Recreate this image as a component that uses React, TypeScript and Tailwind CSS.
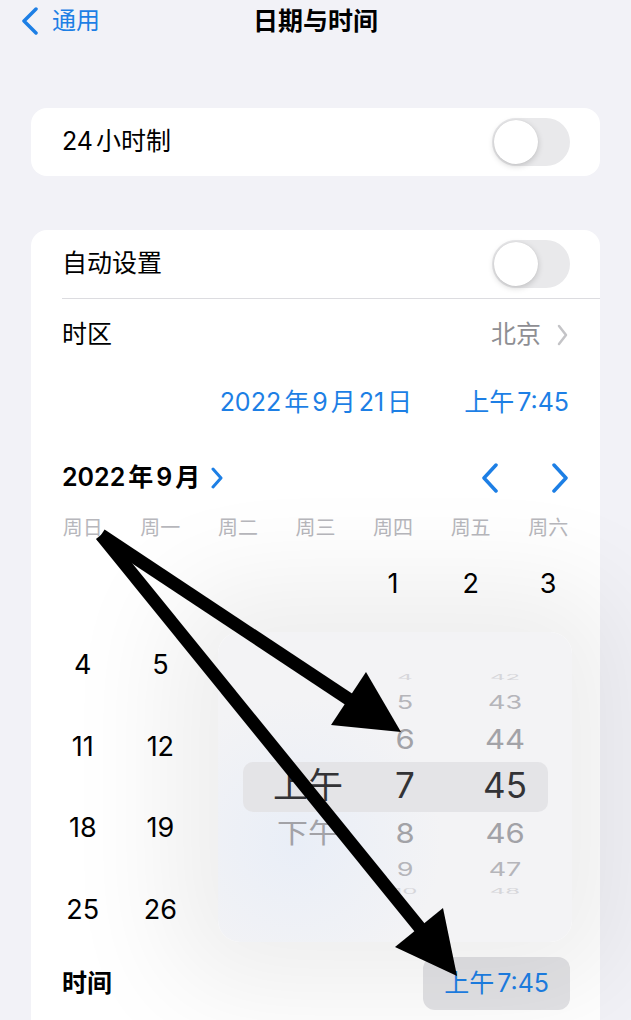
import React from 'react';

const FONT = 'font-[Inter,"Noto_Sans_CJK_SC",sans-serif]';
const BLUE = 'text-[#1d7fe5]';

// iOS puts a little space where Latin digits meet CJK glyphs
function Mixed({ text }: { text: string }) {
  const parts = text.match(/[\u4e00-\u9fff]+|[^\u4e00-\u9fff]+/g) ?? [];
  return (
    <>
      {parts.map((p, i) => (
        <span key={i} className={i > 0 ? 'ml-[3px]' : ''}>{p}</span>
      ))}
    </>
  );
}

function Toggle() {
  return (
    <div className="w-[78px] h-[48px] rounded-full bg-[#e9e9eb] p-[2px] flex items-center">
      <div className="w-[44px] h-[44px] rounded-full bg-white shadow-[0_2px_6px_rgba(0,0,0,0.18),0_0_1px_rgba(0,0,0,0.1)]" />
    </div>
  );
}

function Chevron({ dir, className, width = 3.5, w = 16, h = 30 }: { dir: 'l' | 'r'; className?: string; width?: number; w?: number; h?: number }) {
  const d = dir === 'l' ? `M${w - 2} 2 L2 ${h / 2} L${w - 2} ${h - 2}` : `M2 2 L${w - 2} ${h / 2} L2 ${h - 2}`;
  return (
    <svg width={w} height={h} viewBox={`0 0 ${w} ${h}`} className={className}>
      <path d={d} fill="none" stroke="currentColor" strokeWidth={width} strokeLinecap="round" strokeLinejoin="round" />
    </svg>
  );
}

const weekdays = ['周日', '周一', '周二', '周三', '周四', '周五', '周六'];

const dateRows: (number | null)[][] = [
  [null, null, null, null, 1, 2, 3],
  [4, 5, 6, 7, 8, 9, 10],
  [11, 12, 13, 14, 15, 16, 17],
  [18, 19, 20, 21, 22, 23, 24],
  [25, 26, 27, 28, 29, 30, null],
];

// wheel slots: box height, font size, vertical squash, colour
const slots = [
  { h: 20, size: 24, sy: 0.3, color: 'text-[#d6d6da]' },
  { h: 28, size: 27, sy: 0.7, color: 'text-[#b5b5ba]' },
  { h: 44, size: 31, sy: 0.88, color: 'text-[#a2a2a7]' },
  { h: 50, size: 35, sy: 1, color: 'text-[#333336]' },
  { h: 44, size: 31, sy: 0.88, color: 'text-[#a2a2a7]' },
  { h: 30, size: 27, sy: 0.7, color: 'text-[#b5b5ba]' },
  { h: 16, size: 24, sy: 0.3, color: 'text-[#d6d6da]' },
];

function Wheel({ items, width }: { items: string[]; width: string }) {
  return (
    <div className={`flex flex-col items-center ${width}`}>
      {items.map((t, i) => (
        <div
          key={i}
          className={`flex items-center justify-center leading-none ${slots[i].color}`}
          style={{ height: slots[i].h, fontSize: slots[i].size, transform: `scaleY(${slots[i].sy})` }}
        >
          {t}
        </div>
      ))}
    </div>
  );
}

function TimePicker() {
  return (
    <div className="absolute left-[218px] top-[632px] w-[354px] h-[310px] rounded-[22px] bg-[radial-gradient(circle_at_22%_68%,#e9eef7_0%,#f3f3f5_42%)] shadow-[0_0_110px_50px_rgba(0,0,0,0.07)]">
      <div className="absolute left-[25px] top-[130px] w-[305px] h-[50px] rounded-[10px] bg-[#e4e4e7]" />
      <div className="relative pt-[36px] pl-[30px] flex">
        <Wheel items={['', '', '', '上午', '下午', '', '']} width="w-[120px]" />
        <Wheel items={['4', '5', '6', '7', '8', '9', '10']} width="w-[74px]" />
        <Wheel items={['42', '43', '44', '45', '46', '47', '48']} width="w-[126px]" />
      </div>
    </div>
  );
}

function Arrows() {
  return (
    <svg className="absolute left-0 top-0 pointer-events-none" width={631} height={1020} viewBox="0 0 631 1020">
      <line x1={101} y1={535} x2={350} y2={700} stroke="#000" strokeWidth={13} />
      <polygon points="331,725 366,672 401,732" fill="#000" />
      <line x1={101} y1={535} x2={420} y2={928} stroke="#000" strokeWidth={13} />
      <polygon points="395,947 443,908 457,976" fill="#000" />
    </svg>
  );
}

export default function App() {
  return (
    <div className={`relative w-[631px] h-[1020px] overflow-hidden bg-[#f2f2f7] text-black ${FONT}`}>
      {/* nav bar */}
      <div className="grid grid-cols-[1fr_auto_1fr] items-center h-[42px]">
        <div className={`flex items-center pl-[22px] gap-[14px] ${BLUE}`}>
          <Chevron dir="l" w={16} h={28} />
          <span className="text-[24px] leading-none">通用</span>
        </div>
        <div className="text-[25px] font-semibold leading-none">日期与时间</div>
        <div />
      </div>

      {/* 24h */}
      <div className="mx-[31px] mt-[66px] h-[68px] rounded-[16px] bg-white flex items-center justify-between pl-[31px] pr-[30px]">
        <span className="text-[25px]"><Mixed text="24小时制" /></span>
        <Toggle />
      </div>

      {/* date & time card */}
      <div className="mx-[31px] mt-[54px] rounded-[16px] bg-white pb-[40px]">
        <div className="h-[68px] flex items-center justify-between pl-[31px] pr-[30px]">
          <span className="text-[25px]">自动设置</span>
          <Toggle />
        </div>
        <div className="ml-[31px] h-px bg-[#dcdce0]" />
        <div className="h-[72px] flex items-center justify-between pl-[31px] pr-[32px]">
          <span className="text-[25px]">时区</span>
          <div className="flex items-center gap-[16px] text-[#8e8e93]">
            <span className="text-[25px]">北京</span>
            <Chevron dir="r" w={11} h={22} width={2.5} className="text-[#c4c4c7]" />
          </div>
        </div>
        <div className={`h-[64px] flex items-center justify-end gap-[52px] pr-[31px] text-[25px] ${BLUE}`}>
          <span><Mixed text="2022年9月21日" /></span>
          <span><Mixed text="上午7:45" /></span>
        </div>

        {/* calendar */}
        <div className="h-[78px] pt-[8px] flex items-center justify-between pl-[31px] pr-[32px]">
          <div className="flex items-center gap-[11px]">
            <span className="text-[25px] font-semibold"><Mixed text="2022年9月" /></span>
            <Chevron dir="r" w={12} h={22} width={3} className={BLUE} />
          </div>
          <div className={`flex items-center gap-[54px] ${BLUE}`}>
            <Chevron dir="l" w={16} h={30} />
            <Chevron dir="r" w={16} h={30} />
          </div>
        </div>
        <div className="grid grid-cols-7 px-[13px] h-[30px] items-center">
          {weekdays.map((w) => (
            <div key={w} className="text-center text-[20px] text-[#b7b7bc]">{w}</div>
          ))}
        </div>
        <div className="grid grid-cols-7 px-[13px]">
          {dateRows.flat().map((d, i) => (
            <div key={i} className="h-[81.6px] flex items-center justify-center text-[27px]">
              {d ?? ''}
            </div>
          ))}
        </div>
        <div className="h-[66px] flex items-center justify-between pl-[31px] pr-[30px]">
          <span className="text-[25px] font-semibold">时间</span>
          <div className={`h-[53px] px-[21px] rounded-[12px] bg-[#e3e3e6] flex items-center text-[25px] ${BLUE}`}>
            <Mixed text="上午7:45" />
          </div>
        </div>
      </div>

      <TimePicker />
      <Arrows />
    </div>
  );
}
